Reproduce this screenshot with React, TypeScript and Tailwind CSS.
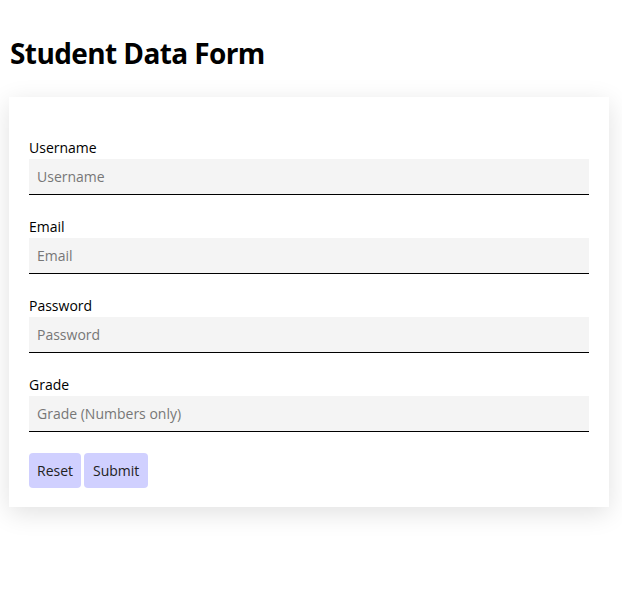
import React from "react";

const fields = [
  { label: "Username", placeholder: "Username", type: "text" },
  { label: "Email", placeholder: "Email", type: "email" },
  { label: "Password", placeholder: "Password", type: "password" },
  { label: "Grade", placeholder: "Grade (Numbers only)", type: "text" },
];

export default function App() {
  return (
    <div className="min-h-screen bg-white pl-[9px] pt-[1px] font-['Open_Sans',sans-serif] text-black">
      <h1 className="mt-[32px] mb-[24px] pl-[1px] text-[28px] font-bold leading-[40px] tracking-[-0.6px]">Student Data Form</h1>
      <div className="w-[600px] bg-white px-5 pt-[41px] pb-[19px] shadow-[0_6px_24px_rgba(0,0,0,0.12)]">
        {fields.map((f) => (
          <div key={f.label} className="mb-[22px] flex flex-col">
            <label className="mb-[1px] h-5 text-[14px] leading-5">{f.label}</label>
            <input
              type={f.type}
              placeholder={f.placeholder}
              className="h-[36px] w-full border-b-[1.5px] border-black bg-[#f4f4f4] px-2 text-[14px] outline-none placeholder:text-[#777]"
            />
          </div>
        ))}
        <div className="-mt-[1px] flex gap-[3px]">
          <button className="h-[35px] rounded-[4px] bg-[#d0d0ff] px-[8px] text-[14px] text-[#222]">Reset</button>
          <button className="h-[35px] rounded-[4px] bg-[#d0d0ff] px-[9px] text-[14px] text-[#222]">Submit</button>
        </div>
      </div>
    </div>
  );
}
